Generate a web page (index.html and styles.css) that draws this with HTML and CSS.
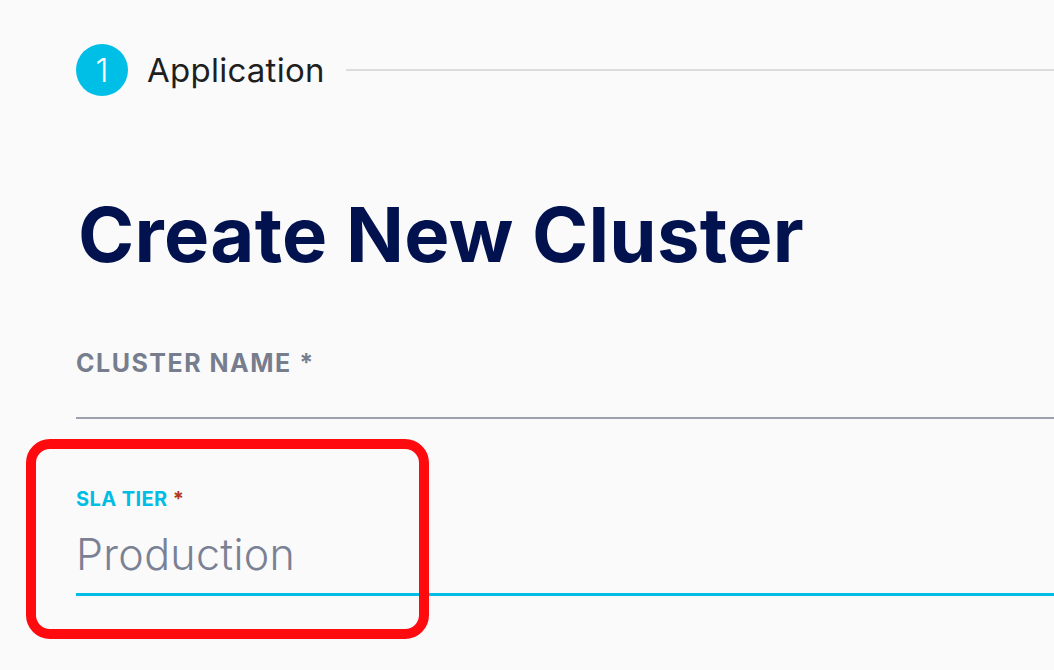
FILE: index.html
```html
<!DOCTYPE html>
<html>
<head>
<meta charset="utf-8">
<link rel="stylesheet" href="styles.css">
</head>
<body>
<main class="page">
  <div class="stepper">
    <span class="step-num">1</span>
    <span class="step-label">Application</span>
    <span class="step-line"></span>
  </div>
  <h1 class="title">Create New Cluster</h1>
  <div class="field">
    <label class="field-label">CLUSTER NAME *</label>
    <div class="field-input"></div>
  </div>
  <div class="field field--active">
    <label class="field-label">SLA TIER <span class="req">*</span></label>
    <div class="field-input">Production</div>
  </div>
  <div class="highlight"></div>
</main>
</body>
</html>
```
FILE: styles.css
```css
html, body {
  margin: 0;
  padding: 0;
  background: #fafafb;
}
body {
  font-family: "Inter", "Noto Sans", sans-serif;
  overflow: hidden;
}
.page {
  position: relative;
  padding-left: 76px;
  height: 670px;
  box-sizing: border-box;
}
.stepper {
  display: flex;
  align-items: center;
  padding-top: 44px;
  height: 52px;
}
.step-num {
  width: 52px;
  height: 52px;
  border-radius: 50%;
  background: #00bfe7;
  color: #fff;
  font-size: 33px;
  font-weight: 300;
  display: flex;
  align-items: center;
  justify-content: center;
  flex: none;
}
.step-label {
  margin-left: 19px;
  font-size: 33px;
  color: #1f1f1f;
  font-weight: 400;
  line-height: 1;
  letter-spacing: 0.25px;
}
.step-line {
  flex: 1;
  height: 2px;
  background: #dcdcdc;
  margin-left: 21px;
}
.title {
  margin: 100px 0 0 2px;
  font-size: 76px;
  line-height: 76px;
  font-weight: 700;
  color: #01124e;
  letter-spacing: 0.3px;
}
.field {
  display: flex;
  flex-direction: column;
}
.field-label {
  display: block;
  margin-top: 79px;
  font-size: 25px;
  line-height: 25px;
  font-weight: 700;
  color: #767e8d;
  letter-spacing: 1.5px;
}
.field-input {
  height: 41px;
  border-bottom: 2px solid #9ba2ae;
}
.field--active .field-label {
  margin-top: 70px;
  font-size: 20px;
  line-height: 20px;
  color: #00bde6;
  letter-spacing: 0.4px;
}
.field--active .req {
  color: #b3391c;
}
.field--active .field-input {
  height: auto;
  margin-top: 24px;
  padding-bottom: 17px;
  font-size: 43px;
  line-height: 43px;
  font-weight: 300;
  color: #7a8194;
  letter-spacing: 0.3px;
  border-bottom: 3px solid #00bde6;
}
.highlight {
  position: absolute;
  left: 26px;
  top: 439px;
  width: 403px;
  height: 200px;
  box-sizing: border-box;
  border: 10px solid #ff0a0f;
  border-radius: 24px;
  pointer-events: none;
}
```
